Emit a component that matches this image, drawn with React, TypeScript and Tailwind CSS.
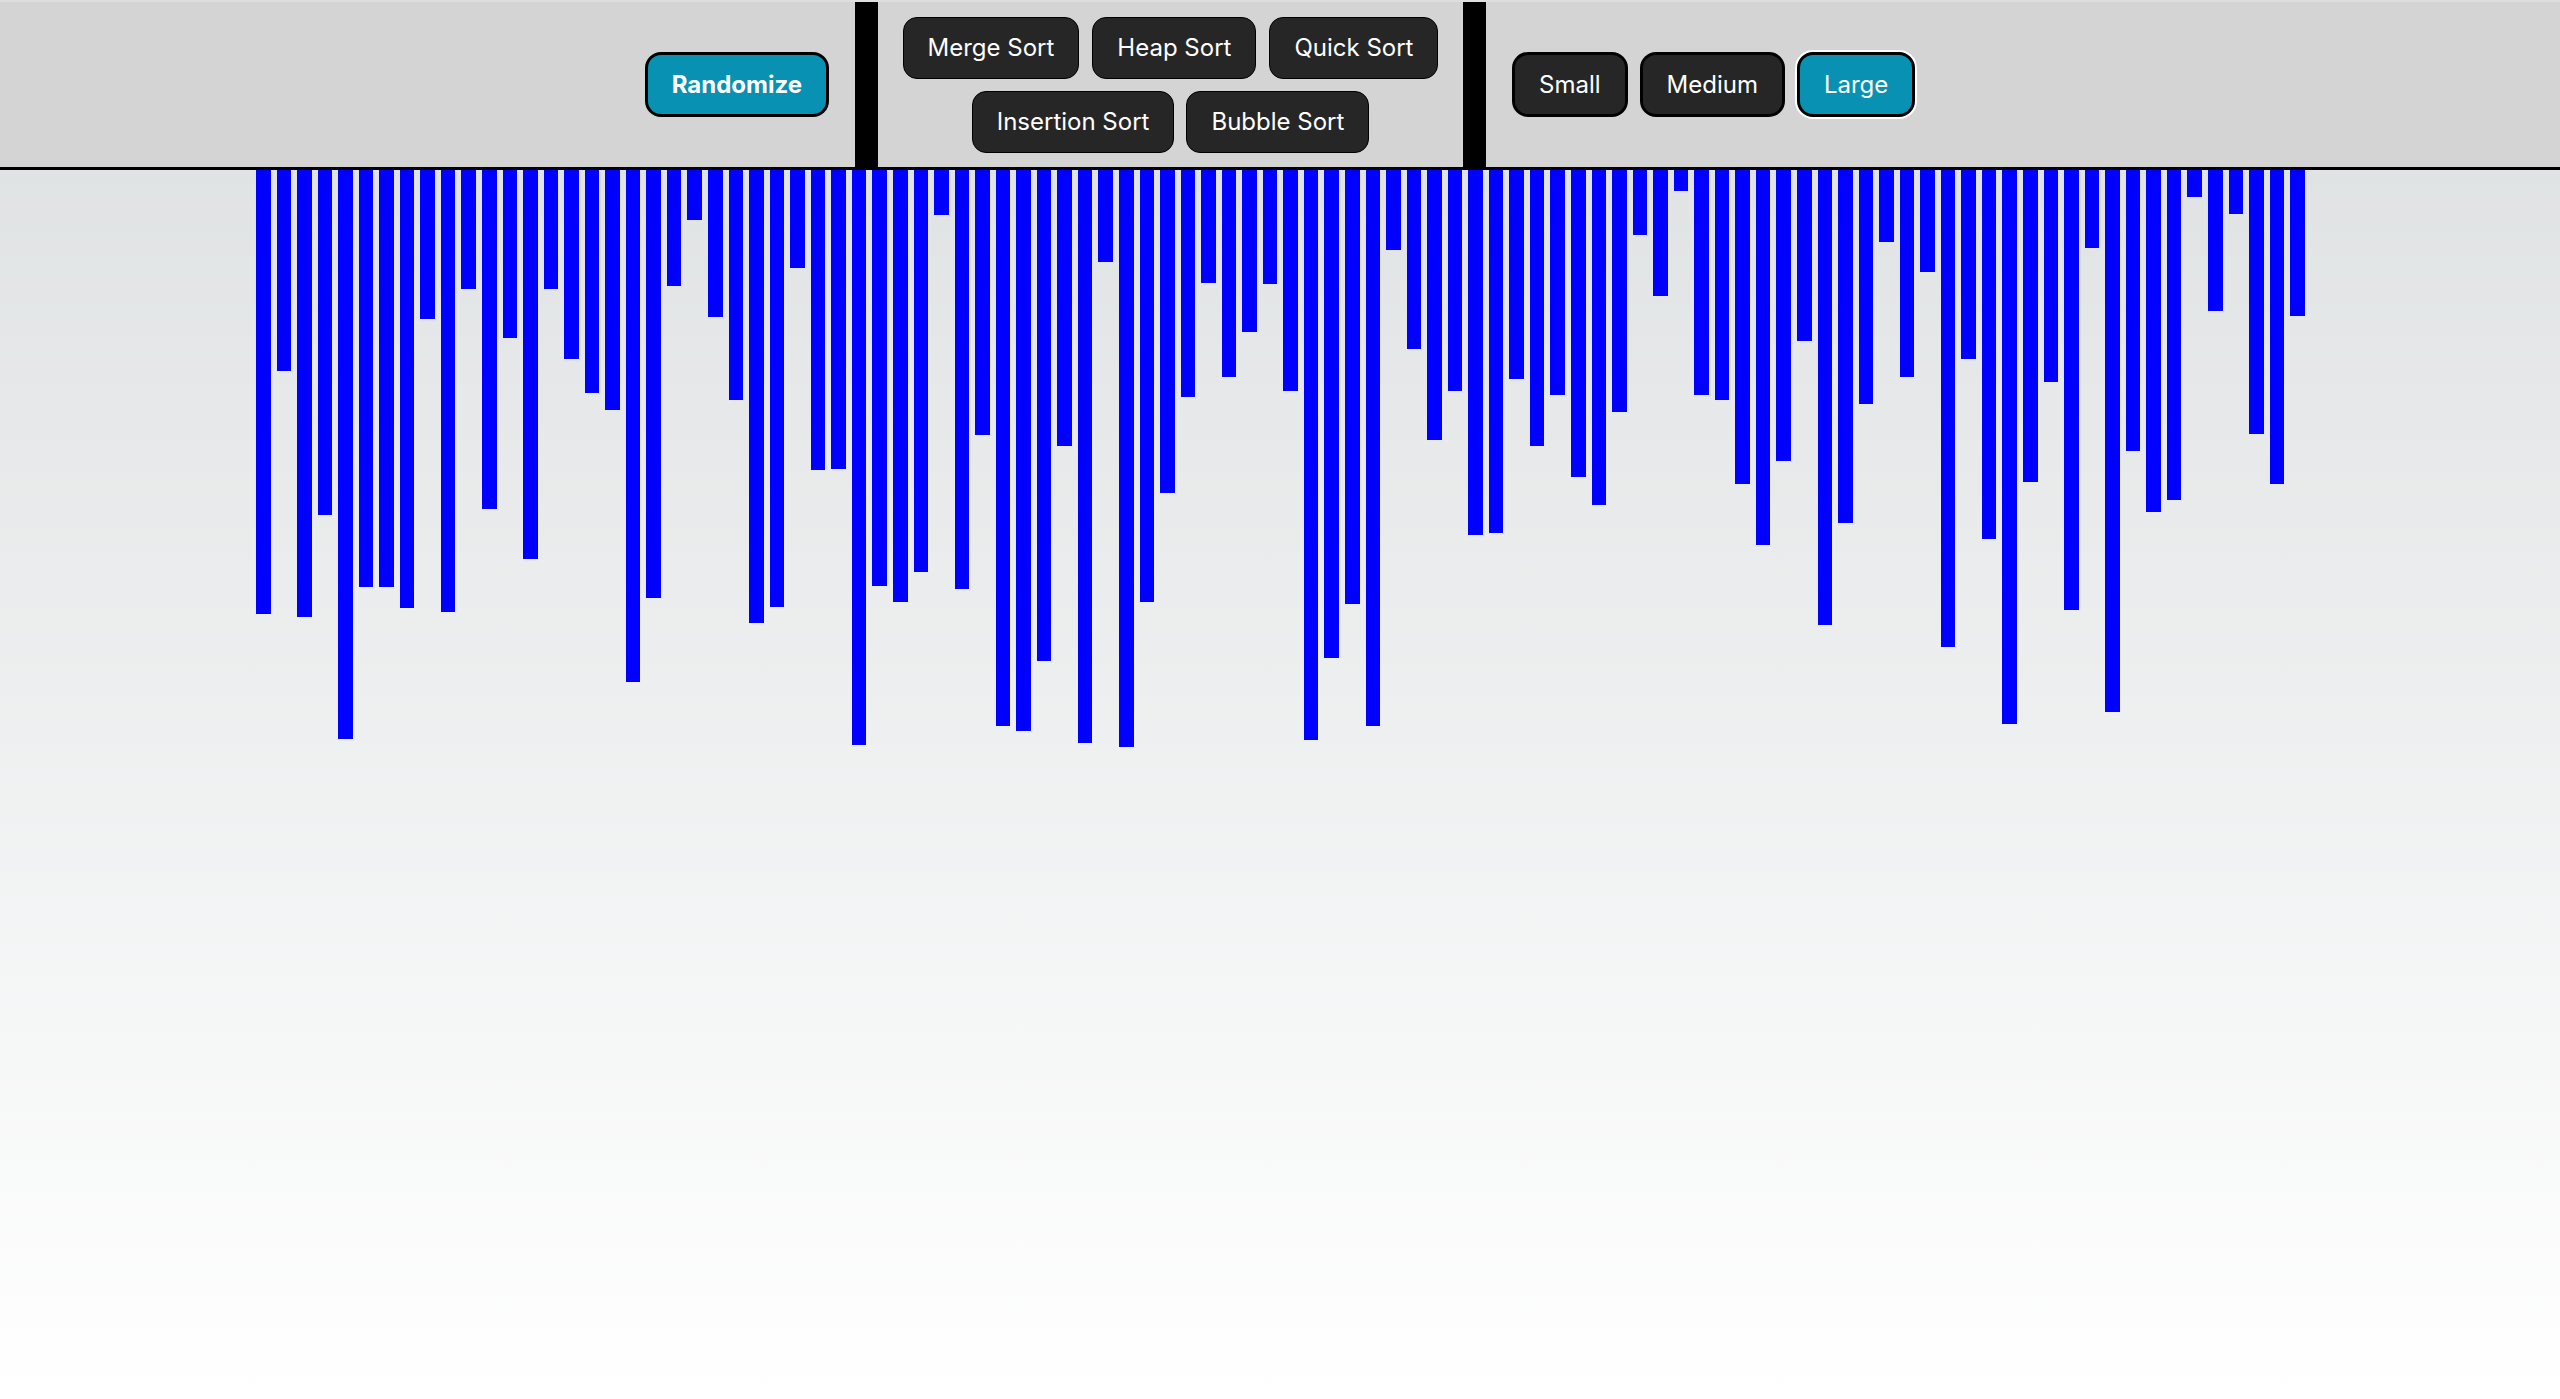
const heights = [
  444, 201, 447, 345, 569, 417, 417, 438, 149, 442,
  119, 339, 168, 389, 119, 189, 223, 240, 512, 428,
  116, 50, 147, 230, 453, 437, 98, 300, 299, 575,
  416, 432, 402, 45, 419, 265, 556, 561, 491, 276,
  573, 92, 577, 432, 323, 227, 113, 207, 162, 114,
  221, 570, 488, 434, 556, 80, 179, 270, 221, 365,
  363, 209, 276, 225, 307, 335, 242, 65, 126, 21,
  225, 230, 314, 375, 291, 171, 455, 353, 234, 72,
  207, 102, 477, 189, 369, 554, 312, 212, 440, 78,
  542, 281, 342, 330, 27, 141, 44, 264, 314, 146,
];

function SortButton({ label }: { label: string }) {
  return (
    <button className="px-6 py-[14px] leading-8 text-2xl text-white bg-[#262626] border border-black rounded-[14px]">
      {label}
    </button>
  );
}

function SizeButton({ label, active }: { label: string; active?: boolean }) {
  return (
    <button
      className={
        active
          ? 'px-6 py-[13.5px] leading-8 text-2xl text-white bg-[#0891b2] border-[3px] border-black rounded-[16px] ring-2 ring-white'
          : 'px-6 py-[13.5px] leading-8 text-2xl text-white bg-[#262626] border-[3px] border-black rounded-[16px]'
      }
    >
      {label}
    </button>
  );
}

export default function App() {
  return (
    <main className="min-h-screen pt-[2px] bg-linear-to-b from-[#dcdfe0] to-white font-['Inter',sans-serif]">
      <header className="h-[168px] bg-[#d4d4d4] border-b-[3px] border-black flex justify-center items-stretch">
        <div className="flex items-center px-[26px]">
          <button className="px-[24px] py-[13.5px] leading-8 text-2xl font-bold text-white bg-[#0891b2] border-[3px] border-black rounded-[16px]">
            Randomize
          </button>
        </div>
        <div className="w-[23px] bg-black" />
        <div className="w-[585px] flex flex-col items-center justify-center gap-3">
          <div className="flex gap-[13px]">
            <SortButton label="Merge Sort" />
            <SortButton label="Heap Sort" />
            <SortButton label="Quick Sort" />
          </div>
          <div className="flex gap-3">
            <SortButton label="Insertion Sort" />
            <SortButton label="Bubble Sort" />
          </div>
        </div>
        <div className="w-[23px] bg-black" />
        <div className="flex items-center gap-3 px-[26px]">
          <SizeButton label="Small" />
          <SizeButton label="Medium" />
          <SizeButton label="Large" active />
        </div>
      </header>

      <section className="w-4/5 mx-auto flex items-start gap-[6px]">
        {heights.map((h, i) => (
          <div key={i} className="flex-1 bg-[#0000ff]" style={{ height: h }} />
        ))}
      </section>
    </main>
  );
}
